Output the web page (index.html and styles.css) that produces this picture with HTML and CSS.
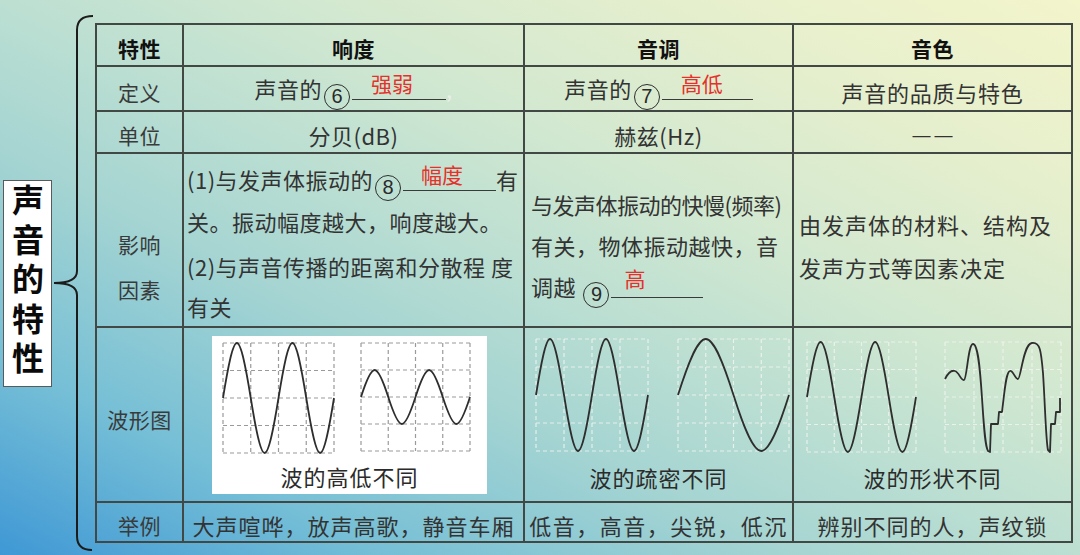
FILE: index.html
```html
<!DOCTYPE html>
<html lang="zh-CN">
<head>
<meta charset="utf-8">
<title>声音的特性</title>
<link rel="stylesheet" href="styles.css">
</head>
<body>
<div class="page">
  <div class="label"><span class="label-text">声音的特性</span></div>
  <svg class="brace" width="43" height="540" viewBox="0 0 43 540">
    <path d="M41,3 C31,3 25,7 25,17 L25,258 C25,266 18,270 2,270 C18,270 25,274 25,282 L25,523 C25,533 31,537 40,537" fill="none" stroke="#1c1c1c" stroke-width="2"/>
  </svg>
  <table class="grid">
    <colgroup><col class="c1"><col class="c2"><col class="c3"><col class="c4"></colgroup>
    <tr class="r-head">
      <th>特性</th><th>响度</th><th>音调</th><th>音色</th>
    </tr>
    <tr class="r-def">
      <td class="key">定义</td>
      <td>声音的<span class="circ">6</span><span class="blank b94"><span class="ans a19">强弱</span></span><span class="ghost">,</span></td>
      <td>声音的<span class="circ">7</span><span class="blank b91"><span class="ans a19">高低</span></span></td>
      <td class="ls75">声音的品质与特色</td>
    </tr>
    <tr class="r-unit">
      <td class="key">单位</td>
      <td>分贝(dB)</td>
      <td>赫兹(Hz)</td>
      <td class="dash">——</td>
    </tr>
    <tr class="r-factor">
      <td class="key factor-key"><div>影响</div><div>因素</div></td>
      <td class="left top">
        <div class="lines col2-lines">
          <div class="ln">(1)与发声体振动的<span class="circ">8</span><span class="blank b93"><span class="ans a18">幅度</span></span>有</div>
          <div class="ln">关。振动幅度越大，响度越大。</div>
          <div class="ln p2">(2)与声音传播的距离和分散程 度</div>
          <div class="ln">有关</div>
        </div>
      </td>
      <td class="left">
        <div class="lines col3-lines">
          <div class="ln tight">与发声体振动的快慢(频率)</div>
          <div class="ln">有关，物体振动越快，音</div>
          <div class="ln">调越 <span class="circ">9</span><span class="blank b92"><span class="ans a13 hi">高</span></span></div>
        </div>
      </td>
      <td class="left">
        <div class="lines col4-lines">
          <div class="ln">由发声体的材料、结构及</div>
          <div class="ln">发声方式等因素决定</div>
        </div>
      </td>
    </tr>
    <tr class="r-wave">
      <td class="key wave-key">波形图</td>
      <td class="wave-cell2">
        <div class="wbox">
          <svg width="275" height="120" viewBox="0 0 275 120">
            <path class="gd" d="M11,7V117M38.75,7V117M66.5,7V117M94.25,7V117M122,7V117M11,7H122M11,34.5H122M11,62H122M11,89.5H122M11,117H122"/>
            <path class="gd" d="M149,7V115M176.25,7V115M203.5,7V115M230.75,7V115M258,7V115M149,7H258M149,34H258M149,61H258M149,88H258M149,115H258"/>
            <path class="wv" d="M11,62 c4.52,-28.16 9.46,-55 13.875,-55 s9.35,26.84 13.875,55 s9.46,55 13.875,55 s9.35,-26.84 13.875,-55 s9.46,-55 13.875,-55 s9.35,26.84 13.875,55 s9.46,55 13.875,55 s9.35,-26.84 13.875,-55"/>
            <path class="wv" d="M149,61 c4.44,-13.82 9.29,-27 13.625,-27 s9.18,13.18 13.625,27 s9.29,27 13.625,27 s9.18,-13.18 13.625,-27 s9.29,-27 13.625,-27 s9.18,13.18 13.625,27 s9.29,27 13.625,27 s9.18,-13.18 13.625,-27"/>
          </svg>
          <div class="cap">波的高低不同</div>
        </div>
      </td>
      <td class="wave-cell">
        <svg width="269" height="130" viewBox="0 0 269 130">
          <path class="gl" d="M11,11V123M39,11V123M67,11V123M95,11V123M123,11V123M11,11H123M11,39H123M11,67H123M11,95H123M11,123H123"/>
          <path class="gl" d="M153,11V123M180.75,11V123M208.5,11V123M236.25,11V123M264,11V123M153,11H264M153,39H264M153,67H264M153,95H264M153,123H264"/>
          <path class="wv" d="M11,67 c4.56,-28.67 9.55,-56 14,-56 s9.44,27.33 14,56 s9.55,56 14,56 s9.44,-27.33 14,-56 s9.55,-56 14,-56 s9.44,27.33 14,56 s9.55,56 14,56 s9.44,-27.33 14,-56"/>
          <path class="wv" d="M153,67 c9.05,-28.67 18.93,-56 27.75,-56 s18.70,27.33 27.75,56 s18.93,56 27.75,56 s18.70,-27.33 27.75,-56"/>
        </svg>
        <div class="cap">波的疏密不同</div>
      </td>
      <td class="wave-cell">
        <svg width="279" height="130" viewBox="0 0 279 130">
          <path class="gl" d="M13,14V124M40.25,14V124M67.5,14V124M94.75,14V124M122,14V124M13,14H122M13,41.5H122M13,69H122M13,96.5H122M13,124H122"/>
          <path class="gl" d="M151,14V124M180,14V124M209,14V124M238,14V124M267,14V124M151,14H267M151,41.5H267M151,69H267M151,96.5H267M151,124H267"/>
          <path class="wv" d="M13,69 c4.44,-28.16 9.29,-55 13.625,-55 s9.18,26.84 13.625,55 s9.29,55 13.625,55 s9.18,-26.84 13.625,-55 s9.29,-55 13.625,-55 s9.18,26.84 13.625,55 s9.29,55 13.625,55 s9.18,-26.84 13.625,-55"/>
          <path class="wv" d="M151,51 C154,45 158,42 161,43 C165,44 167,53 170,52 C173,51 174,16 179,16 C184,16 186,40 188,70 C190,100 191,118 194,123 L196,124 L197,96 L204,96 L205,84 L208,84 C211,60 212,44 216,43 C219,42 221,51 224,51 C227,51 229,16 238,15 C246,14 247,22 249,45 C251,75 252,115 254,122 L256,124 L257,96 L261,96 L262,84 L266,84 L266,70"/>
        </svg>
        <div class="cap">波的形状不同</div>
      </td>
    </tr>
    <tr class="r-ex">
      <td class="key">举例</td>
      <td class="ls1">大声喧哗，放声高歌，静音车厢</td>
      <td class="ls2">低音，高音，尖锐，低沉</td>
      <td class="ls1">辨别不同的人，声纹锁</td>
    </tr>
  </table>
</div>
</body>
</html>
```

FILE: styles.css
```css
html, body {
  margin: 0;
  padding: 0;
  width: 1080px;
  height: 555px;
  overflow: hidden;
}

body {
  font-family: "Noto Sans CJK SC", "Noto Sans", sans-serif;
  background: linear-gradient(to top right, #3f98d5 0%, #76bfd6 18%, #a4d4d2 36%, #bcdfd2 50%, #d2e8d0 64%, #e6efcd 82%, #f3f5cb 100%);
}

.page {
  box-sizing: border-box;
  height: 555px;
  padding-top: 11px;
  display: flex;
  align-items: center;
}

.label {
  margin-left: 3px;
  width: 47px;
  height: 205px;
  background: #fff;
  border: 1px solid #5a5a5a;
  box-sizing: content-box;
  display: flex;
  justify-content: center;
  align-items: flex-start;
}

.label-text {
  writing-mode: vertical-rl;
  text-orientation: upright;
  white-space: nowrap;
  font-size: 32px;
  font-weight: 700;
  line-height: 47px;
  letter-spacing: 7.5px;
  padding-top: 3px;
  color: #0a0a0a;
}

.brace {
  display: block;
  flex: none;
}

.grid {
  border-collapse: collapse;
  table-layout: fixed;
  width: 976px;
  height: 510px;
}

.c1 { width: 87px; }
.c2 { width: 341px; }
.c3 { width: 269px; }
.c4 { width: 279px; }

.grid th,
.grid td {
  border: 2px solid #424945;
  padding: 0;
  text-align: center;
  vertical-align: middle;
  font-size: 22px;
  line-height: 30px;
  color: #333;
  letter-spacing: 0.5px;
  white-space: nowrap;
}

.grid th {
  font-size: 21px;
  font-weight: 700;
  color: #111;
  padding-top: 5px;
}

.r-head { height: 42px; }
.r-def { height: 41px; }
.r-unit { height: 42px; }
.r-factor { height: 170px; }
.r-wave { height: 175px; }
.r-ex { height: 40px; }

.r-def td,
.r-unit td,
.r-ex td {
  padding-top: 6px;
}

.grid td.key {
  font-size: 21px;
  color: #3a3a3a;
}

.factor-key {
  padding-top: 54px !important;
  line-height: 45px !important;
}

.wave-key {
  padding-top: 8px !important;
}

.left { text-align: left !important; }
.top { vertical-align: top !important; }

.lines .ln {
  line-height: 40px;
  white-space: nowrap;
}

.col2-lines {
  padding: 5px 0 0 3px;
}

.col2-lines .p2 {
  margin-top: 5px;
}

.col3-lines {
  padding: 12px 0 0 6px;
}

.col3-lines .ln {
  line-height: 41px;
}

.col3-lines .tight {
  letter-spacing: -0.5px;
}

.col4-lines {
  padding: 11px 0 0 5px;
  letter-spacing: 1px;
}

.col4-lines .ln {
  line-height: 43px;
}

.circ {
  display: inline-block;
  box-sizing: border-box;
  width: 26px;
  height: 26px;
  margin: 0 2px 0 2px;
  border: 1.6px solid #2e2e2e;
  border-radius: 50%;
  font-family: "Liberation Sans", "Noto Sans", sans-serif;
  font-size: 20px;
  line-height: 23px;
  text-align: center;
  letter-spacing: 0;
  color: #2a2a2a;
  vertical-align: -5px;
}

.blank {
  display: inline-block;
  height: 22px;
  line-height: 22px;
  border-bottom: 1px solid #3a3a3a;
  text-align: left;
  letter-spacing: 0;
}

.b91 { width: 91px; }
.b92 { width: 92px; }
.b93 { width: 93px; }
.b94 { width: 94px; }

.ans {
  position: relative;
  top: -6px;
  font-size: 21px;
  color: #e5312b;
  letter-spacing: 0;
}

.ans.hi { top: -9px; }
.a13 { padding-left: 13px; }
.a18 { padding-left: 18px; }
.a19 { padding-left: 19px; }

.ghost {
  color: #e9efe6;
}

.grid td.dash {
  font-family: "Liberation Sans", sans-serif;
  font-size: 18px;
  letter-spacing: 4px;
  text-indent: 4px;
}

.ls75 { letter-spacing: 0.75px !important; }
.ls1 { letter-spacing: 1px !important; }
.ls2 { letter-spacing: 1.5px !important; }

.wave-cell2 {
  padding-right: 8px !important;
}

.wbox {
  width: 275px;
  height: 158px;
  margin: 0 auto;
  background: #fff;
  display: flex;
  flex-direction: column;
  align-items: center;
}

.wbox svg,
.wave-cell svg {
  display: block;
}

.wbox .cap {
  margin-top: 5px;
}

.wave-cell {
  vertical-align: top !important;
}

.cap {
  font-size: 22px;
  line-height: 30px;
  color: #2b2b2b;
  letter-spacing: 1px;
  text-align: center;
}

.wave-cell .cap {
  margin-top: 4px;
}

.gd {
  fill: none;
  stroke: #9a9a9a;
  stroke-width: 1.2;
  stroke-dasharray: 4 3;
}

.gl {
  fill: none;
  stroke: #f2f4f0;
  stroke-width: 1.2;
  stroke-dasharray: 4 3;
  opacity: 0.85;
}

.wv {
  fill: none;
  stroke: #2e2e2e;
  stroke-width: 1.8;
  stroke-linejoin: round;
}
```
